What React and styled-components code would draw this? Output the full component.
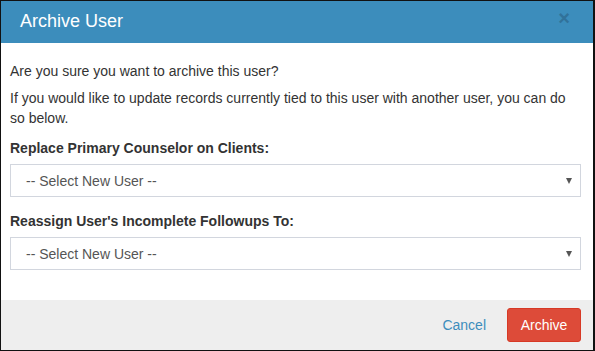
import styled, { createGlobalStyle } from "styled-components";

const GlobalStyle = createGlobalStyle`
  html, body {
    margin: 0;
    padding: 0;
    background: #fff;
  }
  body {
    font-family: "Liberation Sans", Arial, sans-serif;
    font-size: 14px;
    color: #333;
  }
  * {
    box-sizing: border-box;
  }
`;

const Modal = styled.div`
  width: 595px;
  height: 351px;
  border: 1px solid #111;
  border-right-width: 2px;
  display: flex;
  flex-direction: column;
  background: #fff;
`;

const Header = styled.div`
  height: 42px;
  background: #3c8dbc;
  display: flex;
  align-items: center;
  justify-content: space-between;
  padding: 0 19px 0 19px;
`;

const Title = styled.h4`
  margin: 0;
  color: #fff;
  font-size: 18px;
  font-weight: normal;
  line-height: 20px;
  padding-bottom: 2px;
`;

const Close = styled.span`
  color: #31729a;
  font-size: 20px;
  font-weight: bold;
  line-height: 1;
  margin-top: -8px;
  margin-right: 4px;
`;

const Body = styled.div`
  flex: 1;
  padding: 18px 12px 0 9px;
`;

const Text = styled.p`
  margin: 0 0 7px;
  line-height: 20px;
`;

const Label = styled.label`
  display: block;
  font-weight: bold;
  line-height: 20px;
  margin: ${({ $first }) => ($first ? "10px" : "14px")} 0 6px;
`;

const Select = styled.div`
  height: 33px;
  border: 1px solid #d2d6de;
  display: flex;
  align-items: center;
  justify-content: space-between;
  padding: 0 8px 0 15px;
  color: #555;
`;

const Arrow = styled.span`
  width: 0;
  height: 0;
  border-left: 3.5px solid transparent;
  border-right: 3.5px solid transparent;
  border-top: 6px solid #555;
  margin-top: 1px;
`;

const Footer = styled.div`
  height: 50px;
  background: #eee;
  display: flex;
  align-items: center;
  justify-content: flex-end;
  gap: 21px;
  padding: 0 12px 0 0;
`;

const LinkButton = styled.span`
  color: #3c8dbc;
  line-height: 20px;
`;

const Button = styled.span`
  background: #dd4b39;
  color: #fff;
  border: 1px solid #d73925;
  border-radius: 3px;
  height: 34px;
  width: 74px;
  display: flex;
  align-items: center;
  justify-content: center;
`;

const UserSelect = () => (
  <Select>
    <span>-- Select New User --</span>
    <Arrow />
  </Select>
);

export default function App() {
  return (
    <>
      <GlobalStyle />
      <Modal>
        <Header>
          <Title>Archive User</Title>
          <Close>×</Close>
        </Header>
        <Body>
          <Text>Are you sure you want to archive this user?</Text>
          <Text>
            If you would like to update records currently tied to this user
            with another user, you can do so below.
          </Text>
          <Label $first>Replace Primary Counselor on Clients:</Label>
          <UserSelect />
          <Label>Reassign User's Incomplete Followups To:</Label>
          <UserSelect />
        </Body>
        <Footer>
          <LinkButton>Cancel</LinkButton>
          <Button>Archive</Button>
        </Footer>
      </Modal>
    </>
  );
}
